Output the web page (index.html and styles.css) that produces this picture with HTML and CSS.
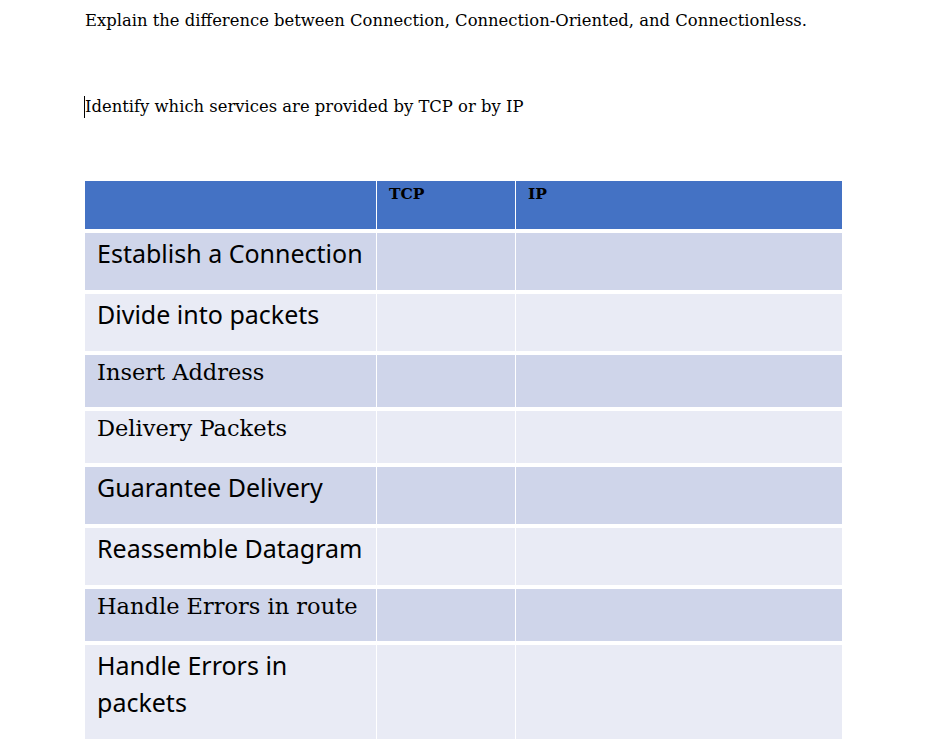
FILE: index.html
```html
<!DOCTYPE html>
<html lang="en">
<head>
<meta charset="utf-8">
<title>TCP or IP</title>
<link rel="stylesheet" href="styles.css">
</head>
<body>
<div class="page">
  <p class="title">Explain the difference between Connection, Connection-Oriented, and Connectionless.</p>
  <p class="question"><span class="caret"></span>Identify which services are provided by TCP or by IP</p>
  <div class="table">
    <div class="row head">
      <div class="cell"></div>
      <div class="cell">TCP</div>
      <div class="cell">IP</div>
    </div>
    <div class="row odd tall">
      <div class="cell sans">Establish a Connection</div>
      <div class="cell"></div>
      <div class="cell"></div>
    </div>
    <div class="row even tall">
      <div class="cell sans">Divide into packets</div>
      <div class="cell"></div>
      <div class="cell"></div>
    </div>
    <div class="row odd short">
      <div class="cell serif">Insert Address</div>
      <div class="cell"></div>
      <div class="cell"></div>
    </div>
    <div class="row even short">
      <div class="cell serif">Delivery Packets</div>
      <div class="cell"></div>
      <div class="cell"></div>
    </div>
    <div class="row odd tall">
      <div class="cell sans">Guarantee Delivery</div>
      <div class="cell"></div>
      <div class="cell"></div>
    </div>
    <div class="row even tall">
      <div class="cell sans">Reassemble Datagram</div>
      <div class="cell"></div>
      <div class="cell"></div>
    </div>
    <div class="row odd short">
      <div class="cell serif">Handle Errors in route</div>
      <div class="cell"></div>
      <div class="cell"></div>
    </div>
    <div class="row even double">
      <div class="cell sans">Handle Errors in<br>packets</div>
      <div class="cell"></div>
      <div class="cell"></div>
    </div>
  </div>
</div>
</body>
</html>
```

FILE: styles.css
```css
html, body {
  margin: 0;
  padding: 0;
  background: #ffffff;
}

.page {
  padding-left: 85px;
  width: 757px;
  color: #000000;
}

.title {
  margin: 0;
  padding-top: 10px;
  height: 22px;
  font-family: "DejaVu Serif", serif;
  font-size: 16.4px;
  line-height: 22px;
  white-space: nowrap;
}

.question {
  margin: 0;
  margin-top: 64px;
  height: 22px;
  position: relative;
  font-family: "DejaVu Serif", serif;
  font-size: 16.4px;
  line-height: 22px;
  white-space: nowrap;
}

.caret {
  position: absolute;
  left: -1px;
  top: 0;
  width: 1px;
  height: 22px;
  background: #000000;
}

.table {
  margin-top: 63px;
  display: flex;
  flex-direction: column;
  gap: 4px;
  width: 757px;
}

.row {
  display: grid;
  grid-template-columns: 291px 138px 326px;
  column-gap: 1px;
}

.row .cell {
  padding-left: 12px;
  box-sizing: border-box;
}

.head {
  height: 48px;
}

.head .cell {
  background: #4472c4;
  font-family: "DejaVu Serif", serif;
  font-weight: bold;
  font-size: 15.5px;
  line-height: 20px;
  padding-top: 3px;
}

.odd .cell {
  background: #cfd5ea;
}

.even .cell {
  background: #e9ebf5;
}

.tall {
  height: 57px;
}

.short {
  height: 52px;
}

.double {
  height: 94px;
}

.sans {
  font-family: "Noto Sans", sans-serif;
  font-size: 25px;
  line-height: 37px;
  padding-top: 2px;
}

.serif {
  font-family: "DejaVu Serif", serif;
  font-size: 22.5px;
  line-height: 32px;
  padding-top: 1px;
}
```
